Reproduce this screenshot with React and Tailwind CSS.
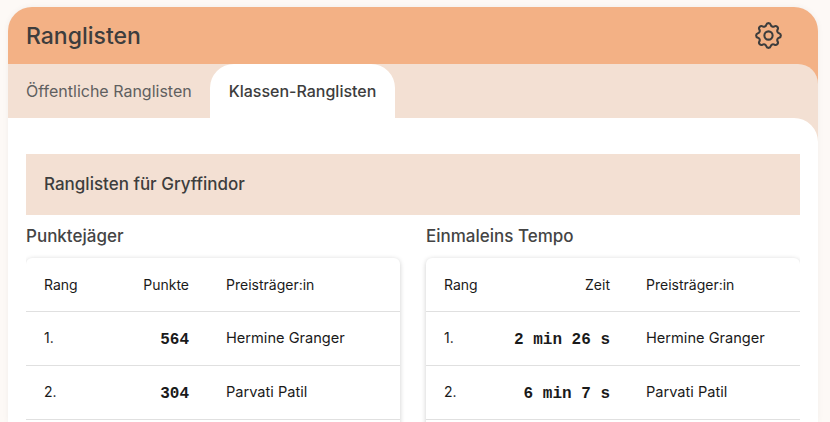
import { TbSettings } from 'react-icons/tb';

const boards = [
  {
    title: 'Punktejäger',
    valueLabel: 'Punkte',
    valueCol: 'w-[83px]',
    nameHead: 'pl-[37px]',
    nameCell: 'pl-[37px]',
    rows: [
      ['1.', '564', 'Hermine Granger'],
      ['2.', '304', 'Parvati Patil'],
    ],
  },
  {
    title: 'Einmaleins Tempo',
    valueLabel: 'Zeit',
    valueCol: 'w-[104px]',
    nameHead: 'pl-[36px]',
    nameCell: 'pl-[36px]',
    rows: [
      ['1.', '2 min 26 s', 'Hermine Granger'],
      ['2.', '6 min 7 s', 'Parvati Patil'],
    ],
  },
];

function Board({ board }) {
  return (
    <div>
      <h3 className="text-[17px] leading-[20px] font-[550] text-[#444444] mb-[12px]">{board.title}</h3>
      <div className="bg-white rounded-[6px] h-[200px] shadow-[0_1px_5px_rgba(0,0,0,0.2)]">
        <table className="w-full table-fixed border-collapse text-[14px] text-[#1a1a1a]">
          <thead>
            <tr className="h-[53px] border-b border-[#e0e0e0]">
              <th className="w-[18px]"></th>
              <th className="w-[62px] text-left font-normal">Rang</th>
              <th className={`${board.valueCol} text-right font-normal`}>{board.valueLabel}</th>
              <th className={`${board.nameHead} text-left font-normal`}>Preisträger:in</th>
            </tr>
          </thead>
          <tbody>
            {board.rows.map((row) => (
              <tr key={row[0]} className="h-[54px] border-b border-[#e0e0e0]">
                <td></td>
                <td className="pb-[2px]">{row[0]}</td>
                <td className="pt-[3px] text-right font-bold text-[16px] font-['Liberation_Mono',monospace] whitespace-nowrap">{row[1]}</td>
                <td className={`${board.nameCell} pt-[2px] text-[14.6px]`}>{row[2]}</td>
              </tr>
            ))}
          </tbody>
        </table>
      </div>
    </div>
  );
}

export default function App() {
  return (
    <div className="h-[422px] overflow-hidden bg-[#fdf9f6] pt-[7px] px-[8px] pr-[12px] font-['Inter',sans-serif]">
      <div className="bg-[#f3b185] rounded-t-[24px] shadow-[0_0_6px_rgba(0,0,0,0.05)]">
        <div className="h-[57px] flex items-center justify-between pl-[18px] pr-[33px]">
          <h1 className="text-[23px] font-medium text-[#3d3d3d] pt-[1px]">Ranglisten</h1>
          <TbSettings className="w-[33px] h-[33px] text-[#3d3d3d]" strokeWidth={1.5} />
        </div>
        <div className="bg-[#f3e0d3] rounded-tr-[20px]">
          <div className="h-[54px] flex items-stretch">
            <div className="w-[202px] pl-[18px] flex items-center text-[16px] text-[#5f5f5f]">Öffentliche Ranglisten</div>
            <div className="w-[185px] bg-white rounded-t-[24px] flex items-center justify-center text-[16px] font-medium text-[#3d3d3d]">Klassen-Ranglisten</div>
          </div>
          <div className="bg-white rounded-tr-[24px] h-[304px] px-[18px] pt-[36px]">
            <div className="h-[61px] bg-[#f3e0d3] flex items-center px-[18px] text-[17px] font-[550] text-[#3d3d3d]">
              Ranglisten für Gryffindor
            </div>
            <div className="grid grid-cols-2 gap-[26px] mt-[11px] overflow-x-clip">
              {boards.map((board) => (
                <Board key={board.title} board={board} />
              ))}
            </div>
          </div>
        </div>
      </div>
    </div>
  );
}
